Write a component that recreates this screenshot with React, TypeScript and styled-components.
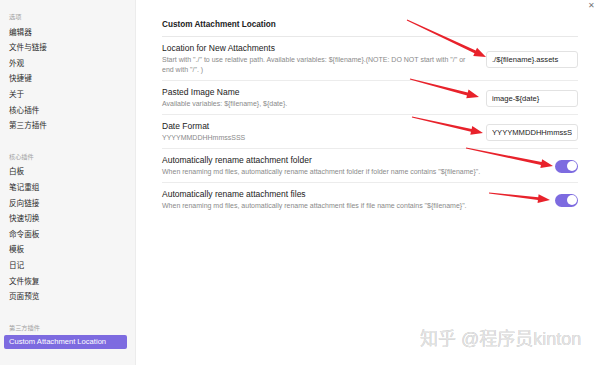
import styled, { createGlobalStyle } from "styled-components";

const GlobalStyle = createGlobalStyle`
  html, body {
    margin: 0;
    padding: 0;
    background: #ffffff;
  }
  body {
    font-family: "Liberation Sans", "Noto Sans CJK SC", sans-serif;
    -webkit-font-smoothing: antialiased;
  }
`;

const sections = [
  {
    title: "选项",
    items: ["编辑器", "文件与链接", "外观", "快捷键", "关于", "核心插件", "第三方插件"],
  },
  {
    title: "核心插件",
    items: ["白板", "笔记重组", "反向链接", "快速切换", "命令面板", "模板", "日记", "文件恢复", "页面预览"],
  },
  {
    title: "第三方插件",
    items: ["Custom Attachment Location"],
    active: 0,
  },
];

type Setting = {
  name: string;
  desc: string;
  input?: string;
  toggle?: boolean;
};

const settings: Setting[] = [
  {
    name: "Location for New Attachments",
    desc: 'Start with "./" to use relative path. Available variables: ${filename}.(NOTE: DO NOT start with "/" or end with "/". )',
    input: "./${filename}.assets",
  },
  {
    name: "Pasted Image Name",
    desc: "Available variables: ${filename}, ${date}.",
    input: "image-${date}",
  },
  {
    name: "Date Format",
    desc: "YYYYMMDDHHmmssSSS",
    input: "YYYYMMDDHHmmssSSS",
  },
  {
    name: "Automatically rename attachment folder",
    desc: 'When renaming md files, automatically rename attachment folder if folder name contains "${filename}".',
    toggle: true,
  },
  {
    name: "Automatically rename attachment files",
    desc: 'When renaming md files, automatically rename attachment files if file name contains "${filename}".',
    toggle: true,
  },
];

// red annotation arrows: [startX, startY, tipX, tipY]
const arrows = [
  [407, 20, 486, 57],
  [410, 79, 479, 97],
  [412, 117, 483, 133],
  [466, 148, 553, 166],
  [489, 193, 550, 200],
];

function arrowShape(x1: number, y1: number, x2: number, y2: number) {
  const dx = x2 - x1;
  const dy = y2 - y1;
  const len = Math.sqrt(dx * dx + dy * dy);
  const ux = dx / len;
  const uy = dy / len;
  const nx = -uy;
  const ny = ux;
  const headLen = 12;
  const headW = 4.5;
  const bx = x2 - ux * headLen;
  const by = y2 - uy * headLen;
  const w0 = 0.5;
  const w1 = 1.5;
  const pts = [
    [x1 + nx * w0, y1 + ny * w0],
    [bx + nx * w1, by + ny * w1],
    [bx + nx * headW, by + ny * headW],
    [x2, y2],
    [bx - nx * headW, by - ny * headW],
    [bx - nx * w1, by - ny * w1],
    [x1 - nx * w0, y1 - ny * w0],
  ];
  return pts.map((p) => p.join(",")).join(" ");
}

export default function App() {
  return (
    <Page>
      <GlobalStyle />
      <Sidebar>
        {sections.map((section) => (
          <Section key={section.title}>
            <SectionTitle>{section.title}</SectionTitle>
            {section.items.map((item, i) => (
              <NavItem key={item} $active={section.active === i}>
                {item}
              </NavItem>
            ))}
          </Section>
        ))}
      </Sidebar>
      <Main>
        <Heading>Custom Attachment Location</Heading>
        {settings.map((s) => (
          <Row key={s.name}>
            <Info>
              <Name>{s.name}</Name>
              <Desc>{s.desc}</Desc>
            </Info>
            {s.input !== undefined && <TextInput readOnly value={s.input} />}
            {s.toggle && (
              <Toggle $on={s.toggle}>
                <Knob />
              </Toggle>
            )}
          </Row>
        ))}
      </Main>
      <Close>✕</Close>
      <Overlay width="600" height="365" viewBox="0 0 600 365">
        {arrows.map(([a, b, c, d], i) => (
          <polygon key={i} points={arrowShape(a, b, c, d)} fill="#e8222b" />
        ))}
      </Overlay>
      <Watermark>知乎 @程序员kinton</Watermark>
    </Page>
  );
}

const Page = styled.div`
  position: relative;
  display: flex;
  width: 600px;
  height: 365px;
  overflow: hidden;
  background: #ffffff;
`;

const Sidebar = styled.nav`
  width: 136px;
  flex-shrink: 0;
  box-sizing: border-box;
  padding: 9px 8px 0 4px;
  background: #f6f6f6;
  border-right: 1px solid #ececec;
  display: flex;
  flex-direction: column;
  gap: 15px;
`;

const Section = styled.div`
  display: flex;
  flex-direction: column;
`;

const SectionTitle = styled.div`
  height: 15.6px;
  line-height: 15.6px;
  padding-left: 5px;
  font-size: 6.2px;
  color: #a3a3a3;
`;

const NavItem = styled.div<{ $active?: boolean }>`
  height: ${(p) => (p.$active ? "14px" : "15.6px")};
  line-height: ${(p) => (p.$active ? "14px" : "15.6px")};
  padding-left: 5px;
  font-size: 7.6px;
  border-radius: 2px;
  color: ${(p) => (p.$active ? "#ffffff" : "#2b2b2b")};
  background: ${(p) => (p.$active ? "#7d6be0" : "transparent")};
`;

const Main = styled.main`
  flex: 1;
  padding: 19px 22px 0 26px;
  display: flex;
  flex-direction: column;
`;

const Heading = styled.div`
  font-size: 8.2px;
  font-weight: bold;
  color: #222;
  line-height: 12px;
  padding-bottom: 5px;
  border-bottom: 1px solid #e8e8e8;
`;

const Row = styled.div`
  display: flex;
  align-items: center;
  gap: 12px;
  padding: 6px 0 5px;
  border-bottom: 1px solid #ececec;

  &:last-child {
    border-bottom: none;
  }
`;

const Info = styled.div`
  flex: 1;
  display: flex;
  flex-direction: column;
  gap: 1px;
`;

const Name = styled.div`
  font-size: 8.5px;
  line-height: 11px;
  color: #222;
`;

const Desc = styled.div`
  font-size: 7px;
  line-height: 10px;
  color: #8a8a8a;
`;

const TextInput = styled.input`
  width: 92px;
  height: 17px;
  box-sizing: border-box;
  flex-shrink: 0;
  padding: 0 5px;
  border: 1px solid #e2e2e2;
  border-radius: 3px;
  font-family: "Liberation Sans", sans-serif;
  font-size: 7.6px;
  color: #222;
  background: #fff;
  outline: none;
`;

const Toggle = styled.div<{ $on?: boolean }>`
  width: 23px;
  height: 13px;
  flex-shrink: 0;
  box-sizing: border-box;
  padding: 1.5px;
  border-radius: 7px;
  display: flex;
  justify-content: ${(p) => (p.$on ? "flex-end" : "flex-start")};
  background: ${(p) => (p.$on ? "#7d6be0" : "#ccc")};
`;

const Knob = styled.div`
  width: 10px;
  height: 10px;
  border-radius: 50%;
  background: #fff;
`;

const Close = styled.div`
  position: absolute;
  top: 0;
  right: 5px;
  font-size: 8px;
  line-height: 12px;
  color: #777;
`;

const Overlay = styled.svg`
  position: absolute;
  left: 0;
  top: 0;
  pointer-events: none;
`;

const Watermark = styled.div`
  position: absolute;
  left: 420px;
  top: 328px;
  font-size: 18px;
  line-height: 22px;
  color: #e4e4e4;
  text-shadow: 0 0 0.6px #a8a8a8;
  white-space: nowrap;
`;
